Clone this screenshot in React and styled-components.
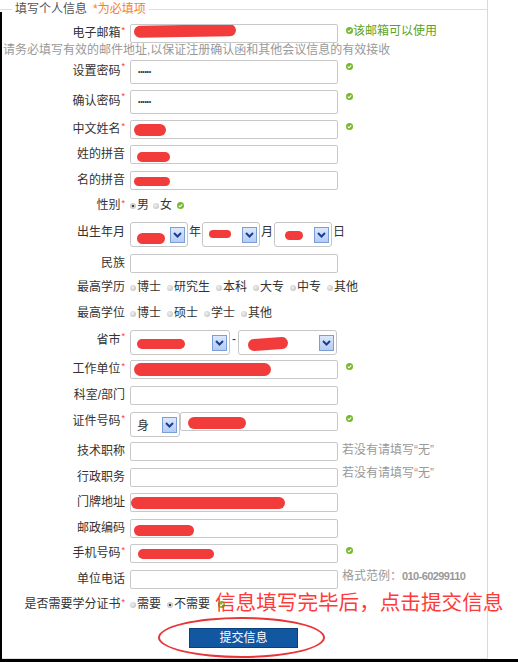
import React from "react";
import styled, { createGlobalStyle } from "styled-components";

const GlobalStyle = createGlobalStyle`
  html, body {
    margin: 0;
    padding: 0;
    background: #fff;
  }
  body {
    font-family: "Liberation Sans", "Noto Sans CJK SC", sans-serif;
    font-size: 12px;
    color: #333;
    overflow: hidden;
  }
`;

const Page = styled.div`
  position: relative;
  width: 518px;
  height: 662px;
  box-sizing: border-box;
  border-bottom: 3px solid #000;
  overflow: hidden;

  &::before {
    content: "";
    position: absolute;
    left: 0;
    top: 12px;
    bottom: 0;
    width: 2px;
    background: #000;
  }
`;

const Frame = styled.div`
  width: 488px;
  height: 659px;
  box-sizing: border-box;
  border-right: 1px solid #d9d9d9;
  border-bottom: 1px solid #e0e0e0;
`;

const LegendBar = styled.div`
  display: flex;
  align-items: center;
  height: 18px;
`;

const Rule = styled.div`
  height: 1px;
  background: #dddddd;
  flex: ${(p) => (p.$grow ? "1" : "0 0 12px")};
`;

const LegendText = styled.div`
  padding: 0 3px;
  color: #555;
  line-height: 18px;
  white-space: nowrap;
`;

const Required = styled.span`
  color: #f5821f;
  margin-left: 6px;
`;

const Form = styled.div`
  display: flex;
  flex-direction: column;
  padding-top: 6px;
`;

const Row = styled.div`
  display: flex;
  align-items: flex-start;
  height: ${(p) => p.$h}px;
  flex-shrink: 0;
  justify-content: ${(p) => (p.$center ? "center" : "flex-start")};
`;

const Label = styled.div`
  width: 125px;
  flex: none;
  margin-right: 5px;
  text-align: right;
  line-height: ${(p) => p.$lh || 19}px;
  color: #333;
  white-space: nowrap;
`;

const Star = styled.span`
  color: #f33;
  font-size: 9px;
  line-height: 9px;
  vertical-align: top;
  margin-left: 1px;
  position: relative;
  top: 2px;
`;

const Field = styled.div`
  width: ${(p) => p.$w || 208}px;
  height: ${(p) => p.$ht || 19}px;
  box-sizing: border-box;
  border: 1px solid #c9c9c9;
  border-radius: 2px;
  background: #fff;
  display: flex;
  align-items: center;
  padding-left: 3px;
  overflow: hidden;
  flex: none;
`;

const Dots = styled.span`
  font-size: 7px;
  letter-spacing: -0.3px;
  color: #333;
  line-height: 10px;
  margin-left: 4px;
`;

const Blob = styled.span`
  display: inline-block;
  flex: none;
  width: ${(p) => p.$w}px;
  height: ${(p) => p.$bh || 11}px;
  background: #f23b3b;
  border-radius: 7px;
  margin-left: ${(p) => p.$x || 0}px;
  margin-top: ${(p) => p.$y || 0}px;
  transform: rotate(${(p) => p.$r || 0}deg);
`;

const CheckWrap = styled.span`
  display: inline-flex;
  flex: none;
  margin-left: ${(p) => (p.$x === undefined ? 8 : p.$x)}px;
  margin-top: ${(p) => (p.$y === undefined ? 3 : p.$y)}px;
  position: relative;
  z-index: 0;
`;

const OkText = styled.span`
  color: #5ba31c;
  line-height: 14px;
  white-space: nowrap;
`;

const MailTip = styled.div`
  padding-left: 3px;
  color: #999;
  line-height: 14px;
  white-space: nowrap;
`;

const Hint = styled.span`
  color: #999;
  margin-left: 4px;
  line-height: ${(p) => p.$lh || 16}px;
  white-space: nowrap;
`;

const FormatHint = styled.span`
  color: #999;
  margin-left: 4px;
  line-height: 12px;
  white-space: nowrap;
  b {
    font-size: 11px;
    letter-spacing: -0.6px;
  }
`;

const Select = styled.div`
  width: ${(p) => p.$w}px;
  height: 25px;
  box-sizing: border-box;
  border: 1px solid #c6c6c6;
  border-radius: 3px;
  background: #fff;
  display: flex;
  align-items: center;
  justify-content: space-between;
  padding: 0 2px 0 6px;
  flex: none;
  overflow: hidden;
`;

const ArrowBox = styled.span`
  width: 15px;
  height: 16px;
  box-sizing: border-box;
  border: 1px solid #7b9ed6;
  background: linear-gradient(#dce8fc, #b5cbf3);
  display: flex;
  align-items: center;
  justify-content: center;
  flex: none;
`;

const Unit = styled.span`
  margin: 0 1px;
  line-height: 20px;
  color: #333;
`;

const Dash = styled.span`
  width: 8px;
  text-align: center;
  line-height: 18px;
  color: #333;
`;

const Choices = styled.div`
  display: flex;
  align-items: center;
  height: 16px;
`;

const Option = styled.span`
  display: inline-flex;
  align-items: center;
  margin-right: ${(p) => (p.$gap === undefined ? 6 : p.$gap)}px;
  line-height: 16px;
  white-space: nowrap;
  color: #333;
`;

const Dot = styled.span`
  width: 6px;
  height: 6px;
  border-radius: 50%;
  margin-right: 1px;
  margin-top: 1px;
  background: ${(p) =>
    p.$on
      ? "radial-gradient(circle, #444 0 28%, #d8d8d8 38%, #b8b8b8 100%)"
      : "radial-gradient(circle at 40% 40%, #f0f0f0, #b9b9b9)"};
`;

const Note = styled.span`
  position: relative;
  z-index: 1;
  color: #ff3a3a;
  font-family: "Noto Sans CJK SC", sans-serif;
  font-size: 20.6px;
  line-height: 22px;
  margin-top: -6px;
  margin-left: -10px;
  white-space: nowrap;
`;

const ButtonWrap = styled.div`
  position: relative;
`;

const Submit = styled.button`
  width: 109px;
  height: 20px;
  padding: 0;
  background: #1257a2;
  border: 1px solid #0d3f7a;
  color: #fff;
  font-family: "Liberation Sans", "Noto Sans CJK SC", sans-serif;
  font-size: 12px;
  line-height: 18px;
  cursor: pointer;
`;

const Ellipse = styled.div`
  position: absolute;
  left: -31px;
  top: -11px;
  width: 167px;
  height: 41px;
  box-sizing: border-box;
  border: 2px solid #e8353a;
  border-radius: 50%;
  pointer-events: none;
`;

const Check = ({ x, y }) => (
  <CheckWrap $x={x} $y={y}>
    <svg width="7" height="7" viewBox="0 0 7 7">
      <circle cx="3.5" cy="3.5" r="3.5" fill="#78b82a" />
      <path d="M1.7 3.6 L3 4.8 L5.3 2.3" stroke="#fff" strokeWidth="1.1" fill="none" />
    </svg>
  </CheckWrap>
);

const Arrow = () => (
  <ArrowBox>
    <svg width="11" height="8" viewBox="0 0 11 8">
      <path d="M2 2 L5.5 5.5 L9 2" stroke="#1b3f8f" strokeWidth="2" fill="none" />
    </svg>
  </ArrowBox>
);

const Radio = ({ on, gap, children }) => (
  <Option $gap={gap}>
    <Dot $on={on} />
    {children}
  </Option>
);

export default function App() {
  return (
    <>
      <GlobalStyle />
      <Page>
        <Frame>
          <LegendBar>
            <Rule />
            <LegendText>
              填写个人信息<Required>*为必填项</Required>
            </LegendText>
            <Rule $grow />
          </LegendBar>

          <Form>
            <Row $h={19}>
              <Label>电子邮箱<Star>*</Star></Label>
              <Field>
                <Blob $w={102} $bh={12} $y={-6} $r={-1} />
              </Field>
              <Check />
              <OkText>该邮箱可以使用</OkText>
            </Row>
            <Row $h={17}>
              <MailTip>请务必填写有效的邮件地址,以保证注册确认函和其他会议信息的有效接收</MailTip>
            </Row>
            <Row $h={30}>
              <Label $lh={23}>设置密码<Star>*</Star></Label>
              <Field $ht={24}><Dots>••••••</Dots></Field>
              <Check />
            </Row>
            <Row $h={30}>
              <Label $lh={23}>确认密码<Star>*</Star></Label>
              <Field $ht={24}><Dots>••••••</Dots></Field>
              <Check />
            </Row>
            <Row $h={25}>
              <Label>中文姓名<Star>*</Star></Label>
              <Field>
                <Blob $w={32} $bh={12} />
              </Field>
              <Check />
            </Row>
            <Row $h={26}>
              <Label>姓的拼音</Label>
              <Field>
                <Blob $w={33} $bh={10} $x={3} $y={5} />
              </Field>
            </Row>
            <Row $h={26}>
              <Label>名的拼音</Label>
              <Field>
                <Blob $w={36} $bh={9} $y={2} />
              </Field>
            </Row>
            <Row $h={25}>
              <Label $lh={16}>性别<Star>*</Star></Label>
              <Choices>
                <Radio on gap={4}>男</Radio>
                <Radio gap={0}>女</Radio>
                <Check x={5} y={1} />
              </Choices>
            </Row>
            <Row $h={32}>
              <Label $lh={20}>出生年月</Label>
              <Select $w={58}>
                <Blob $w={28} $bh={11} $y={8} />
                <Arrow />
              </Select>
              <Unit>年</Unit>
              <Select $w={58}>
                <Blob $w={22} $bh={8} $y={-2} />
                <Arrow />
              </Select>
              <Unit>月</Unit>
              <Select $w={58}>
                <Blob $w={18} $bh={9} $x={4} $y={2} />
                <Arrow />
              </Select>
              <Unit>日</Unit>
            </Row>
            <Row $h={25}>
              <Label>民族</Label>
              <Field />
            </Row>
            <Row $h={26}>
              <Label $lh={16}>最高学历</Label>
              <Choices>
                <Radio>博士</Radio>
                <Radio>研究生</Radio>
                <Radio>本科</Radio>
                <Radio>大专</Radio>
                <Radio>中专</Radio>
                <Radio>其他</Radio>
              </Choices>
            </Row>
            <Row $h={25}>
              <Label $lh={16}>最高学位</Label>
              <Choices>
                <Radio>博士</Radio>
                <Radio>硕士</Radio>
                <Radio>学士</Radio>
                <Radio>其他</Radio>
              </Choices>
            </Row>
            <Row $h={30}>
              <Label $lh={20}>省市<Star>*</Star></Label>
              <Select $w={100}>
                <Blob $w={48} $bh={10} $y={2} />
                <Arrow />
              </Select>
              <Dash>-</Dash>
              <Select $w={99}>
                <Blob $w={40} $bh={12} $x={3} $y={3} $r={-4} />
                <Arrow />
              </Select>
            </Row>
            <Row $h={26}>
              <Label>工作单位<Star>*</Star></Label>
              <Field>
                <Blob $w={137} $bh={13} />
              </Field>
              <Check />
            </Row>
            <Row $h={26}>
              <Label>科室/部门</Label>
              <Field />
            </Row>
            <Row $h={30}>
              <Label>证件号码<Star>*</Star></Label>
              <Select $w={50}>
                <span>身</span>
                <Arrow />
              </Select>
              <Field $w={158}>
                <Blob $w={58} $bh={12} $x={4} $y={3} />
              </Field>
              <Check />
            </Row>
            <Row $h={26}>
              <Label>技术职称</Label>
              <Field />
              <Hint>若没有请填写“无”</Hint>
            </Row>
            <Row $h={25}>
              <Label>行政职务</Label>
              <Field />
              <Hint $lh={10}>若没有请填写“无”</Hint>
            </Row>
            <Row $h={26}>
              <Label>门牌地址</Label>
              <Field>
                <Blob $w={154} $bh={12} $x={-3} />
              </Field>
            </Row>
            <Row $h={25}>
              <Label>邮政编码</Label>
              <Field>
                <Blob $w={60} $bh={11} $y={4} />
              </Field>
            </Row>
            <Row $h={26}>
              <Label>手机号码<Star>*</Star></Label>
              <Field>
                <Blob $w={76} $bh={10} $x={4} />
              </Field>
              <Check />
            </Row>
            <Row $h={26}>
              <Label>单位电话</Label>
              <Field />
              <FormatHint>格式范例：<b>010-60299110</b></FormatHint>
            </Row>
            <Row $h={32}>
              <Label $lh={16}>是否需要学分证书<Star>*</Star></Label>
              <Choices>
                <Radio>需要</Radio>
                <Radio on gap={0}>不需要</Radio>
                <Check x={8} y={1} />
                <Note>信息填写完毕后，点击提交信息</Note>
              </Choices>
            </Row>
            <Row $h={30} $center>
              <ButtonWrap>
                <Submit type="button">提交信息</Submit>
                <Ellipse />
              </ButtonWrap>
            </Row>
          </Form>
        </Frame>
      </Page>
    </>
  );
}
